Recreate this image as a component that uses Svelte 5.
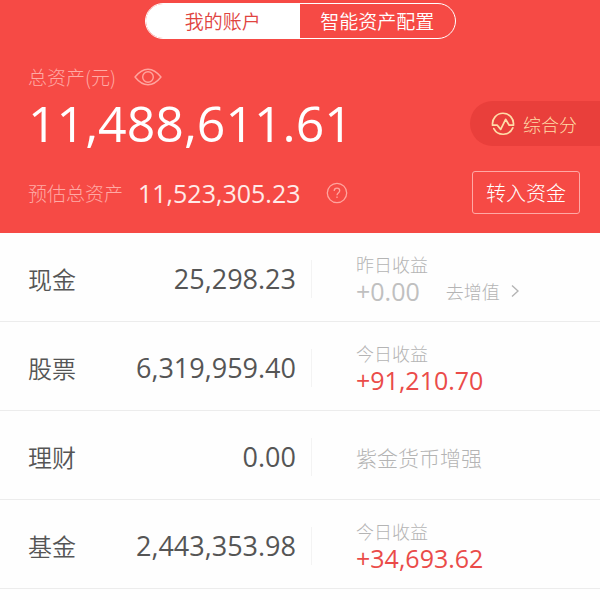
<script lang="ts">
interface Asset {
	name: string;
	amount: string;
	note: string;
	gain?: string;
	muted?: boolean;
	action?: string;
}

const tabs = ['我的账户', '智能资产配置'];

const assets: Asset[] = [
	{ name: '现金', amount: '25,298.23', note: '昨日收益', gain: '+0.00', muted: true, action: '去增值' },
	{ name: '股票', amount: '6,319,959.40', note: '今日收益', gain: '+91,210.70' },
	{ name: '理财', amount: '0.00', note: '紫金货币增强' },
	{ name: '基金', amount: '2,443,353.98', note: '今日收益', gain: '+34,693.62' }
];

let activeTab = $state(0);
</script>

<main class="account">
	<header class="summary">
		<div class="tabs" role="tablist">
			{#each tabs as tab, i}
				<button
					type="button"
					role="tab"
					class="tab"
					class:active={activeTab === i}
					aria-selected={activeTab === i}
					onclick={() => (activeTab = i)}
				>
					{tab}
				</button>
			{/each}
		</div>

		<div class="total-label">
			<span>总资产(元)</span>
			<button type="button" class="icon-button" aria-label="显示或隐藏金额">
				<svg width="28" height="18" viewBox="0 0 28 18" fill="none" stroke="currentColor" stroke-width="1.4">
					<path d="M1 9C5 4 9.500 1.200 14 1.200S23 4 27 9C23 14 18.500 16.800 14 16.800S5 14 1 9Z" stroke-linejoin="round" />
					<circle cx="14" cy="9" r="5.300" />
				</svg>
			</button>
		</div>

		<div class="total-row">
			<strong class="total">11,488,611.61</strong>
			<button type="button" class="score">
				<svg width="24" height="24" viewBox="0 0 24 24" fill="none" stroke="currentColor" stroke-width="1.7" stroke-linejoin="round" stroke-linecap="round">
					<path d="M1.600 13.200A10.500 10.500 0 1 1 22.400 13.200" />
					<path d="M2.800 16.600A10.500 10.500 0 0 0 21.800 15.800" />
					<path d="M1.600 13.200H6.300L9.700 17.400L14.600 7.300L18.200 13.200H22.400" />
				</svg>
				<span>综合分</span>
			</button>
		</div>

		<div class="estimate-row">
			<span class="estimate-label">预估总资产</span>
			<span class="estimate">11,523,305.23</span>
			<button type="button" class="icon-button" aria-label="说明">
				<svg width="22" height="22" viewBox="0 0 22 22" fill="none" stroke="currentColor" stroke-width="1.300">
					<circle cx="11" cy="11" r="9.700" />
					<path d="M8.200 9C8.200 7.200 9.300 6.200 11 6.200S13.700 7.200 13.700 8.700C13.700 10.600 11 10.800 11 13.200" />
					<path d="M11 14.600V16" />
				</svg>
			</button>
			<button type="button" class="transfer">转入资金</button>
		</div>
	</header>

	<ul class="assets">
		{#each assets as asset}
			<li class="asset">
				<div class="holding">
					<span class="name">{asset.name}</span>
					<span class="amount">{asset.amount}</span>
				</div>
				<div class="detail">
					{#if asset.gain}
						<span class="note">{asset.note}</span>
						<div class="gain-row">
							<span class="gain" class:muted={asset.muted}>{asset.gain}</span>
							{#if asset.action}
								<a class="action" href="#grow">
									{asset.action}
									<svg width="8" height="14" viewBox="0 0 8 14" fill="none" stroke="currentColor" stroke-width="1.400">
										<path d="M1 1.500L7 7L1 12.500" />
									</svg>
								</a>
							{/if}
						</div>
					{:else}
						<span class="product">{asset.note}</span>
					{/if}
				</div>
			</li>
		{/each}
	</ul>
</main>

<style>
:global(body) {
	margin: 0;
	background: #fefefe;
}

.account {
	font-family: 'Noto Sans CJK SC', sans-serif;
	font-weight: 300;
	color: #555;
}

button {
	margin: 0;
	padding: 0;
	border: 0;
	background: none;
	color: inherit;
	font-family: inherit;
	font-weight: inherit;
	cursor: pointer;
}

svg {
	display: block;
	flex-shrink: 0;
}

/* Summary */
.summary {
	display: flex;
	flex-direction: column;
	padding: 3px 0 19px 28px;
	background: #f64a45;
	color: #fff;
}

.tabs {
	display: flex;
	align-self: center;
	box-sizing: border-box;
	width: 311px;
	height: 36px;
	margin-right: 28px;
	border: 1px solid #fff;
	border-radius: 18px;
	overflow: hidden;
}

.tab {
	flex: 1;
	font-size: 19px;
	font-weight: 350;
	line-height: 34px;
	white-space: nowrap;
}

.tab.active {
	background: #fff;
	color: #e0443f;
}

.total-label {
	display: flex;
	align-items: center;
	gap: 18px;
	height: 24px;
	margin-top: 26px;
	font-size: 19px;
	line-height: 24px;
	color: #ffaaa5;
}

.icon-button {
	color: #ffa49e;
}

.total-row {
	display: flex;
	align-items: center;
	justify-content: space-between;
	height: 69px;
}

.total {
	font-family: 'Open Sans', sans-serif;
	font-size: 50px;
	font-weight: 500;
	line-height: 69px;
}

.score {
	display: flex;
	align-items: center;
	gap: 8px;
	height: 45px;
	padding: 0 23px 0 21px;
	border-radius: 23px 0 0 23px;
	background: #e93f3b;
	color: #ffdca8;
	font-size: 18px;
	line-height: 24px;
}

.estimate-row {
	display: flex;
	align-items: center;
	margin-top: 13px;
	padding-right: 20px;
}

.estimate-label {
	font-size: 19px;
	color: #ffaaa5;
}

.estimate {
	margin: 0 26px 0 15px;
	font-family: 'Open Sans', sans-serif;
	font-size: 25px;
	font-weight: 400;
	line-height: 30px;
	color: #ffeae8;
}

.transfer {
	box-sizing: border-box;
	height: 43px;
	margin-left: auto;
	padding: 0 13px;
	border: 1px solid #ffa9a5;
	border-radius: 3px;
	font-size: 20px;
}

/* Asset list */
.assets {
	margin: 0;
	padding: 0;
	list-style: none;
}

.asset {
	display: flex;
	align-items: center;
	box-sizing: border-box;
	min-height: 89px;
	padding-top: 3px;
	border-bottom: 1px solid #ececec;
}

.holding {
	display: flex;
	align-items: center;
	justify-content: space-between;
	box-sizing: border-box;
	width: 52%;
	height: 38px;
	padding: 0 15px 0 28px;
	border-right: 1px solid #f3f3f3;
}

.name {
	font-size: 24px;
	font-weight: 350;
}

.amount {
	font-family: 'Open Sans', sans-serif;
	font-size: 27px;
	font-weight: 400;
}

.detail {
	display: flex;
	flex: 1;
	flex-direction: column;
	padding-left: 44px;
	color: #b4b4b4;
}

.note {
	font-size: 18px;
	line-height: 24px;
}

.gain-row {
	display: flex;
	align-items: center;
	gap: 26px;
	line-height: 30px;
}

.gain {
	font-family: 'Open Sans', sans-serif;
	font-size: 25px;
	font-weight: 400;
	color: #ea4b49;
}

.gain.muted {
	color: #c0c0c0;
}

.action {
	display: flex;
	align-items: center;
	gap: 11px;
	font-size: 18px;
	color: #b4b4b4;
	text-decoration: none;
}

.product {
	font-size: 21px;
}
</style>
